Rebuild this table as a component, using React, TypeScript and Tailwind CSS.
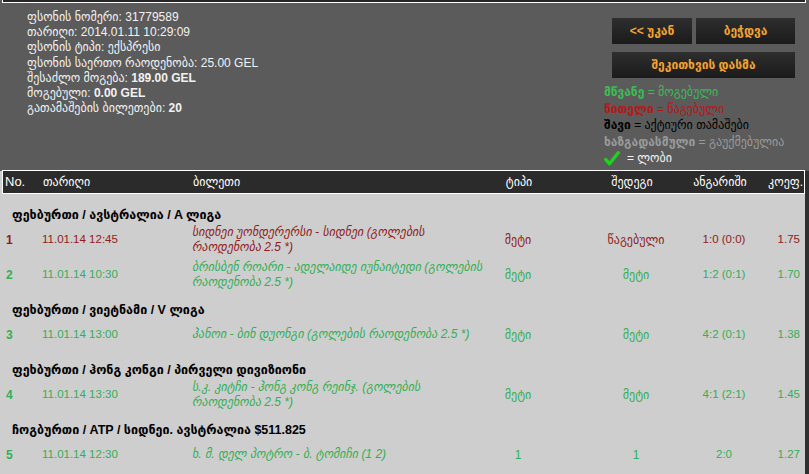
import type { ReactNode } from "react";

type Row = {
  no: number;
  date: string;
  ticket: string[];
  type: string;
  result: string;
  score: string;
  coef: string;
  lost?: boolean;
};

type Group = { title: string; rows: Row[] };

const info: { label: string; value: string; bold?: boolean }[] = [
  { label: "ფსონის ნომერი:", value: "31779589" },
  { label: "თარიღი:", value: "2014.01.11 10:29:09" },
  { label: "ფსონის ტიპი:", value: "ექსპრესი" },
  { label: "ფსონის საერთო რაოდენობა:", value: "25.00 GEL" },
  { label: "შესაძლო მოგება:", value: "189.00 GEL", bold: true },
  { label: "მოგებული:", value: "0.00 GEL", bold: true },
  { label: "გათამაშების ბილეთები:", value: "20", bold: true },
];

const groups: Group[] = [
  {
    title: "ფეხბურთი / ავსტრალია / A ლიგა",
    rows: [
      { no: 1, date: "11.01.14 12:45", ticket: ["სიდნეი უონდერერსი - სიდნეი (გოლების", "რაოდენობა 2.5 *)"], type: "მეტი", result: "წაგებული", score: "1:0 (0:0)", coef: "1.75", lost: true },
      { no: 2, date: "11.01.14 10:30", ticket: ["ბრისბენ როარი - ადელაიდე იუნაიტედი (გოლების", "რაოდენობა 2.5 *)"], type: "მეტი", result: "მეტი", score: "1:2 (0:1)", coef: "1.70" },
    ],
  },
  {
    title: "ფეხბურთი / ვიეტნამი / V ლიგა",
    rows: [
      { no: 3, date: "11.01.14 13:00", ticket: ["ჰანოი - ბინ დუონგი (გოლების რაოდენობა 2.5 *)"], type: "მეტი", result: "მეტი", score: "4:2 (0:1)", coef: "1.38" },
    ],
  },
  {
    title: "ფეხბურთი / ჰონგ კონგი / პირველი დივიზიონი",
    rows: [
      { no: 4, date: "11.01.14 13:30", ticket: ["ს.კ. კიტჩი - ჰონგ კონგ რეინჯ. (გოლების", "რაოდენობა 2.5 *)"], type: "მეტი", result: "მეტი", score: "4:1 (2:1)", coef: "1.45" },
    ],
  },
  {
    title: "ჩოგბურთი / ATP / სიდნეი. ავსტრალია $511.825",
    rows: [
      { no: 5, date: "11.01.14 12:30", ticket: ["ხ. მ. დელ პოტრო - ბ. ტომიჩი (1 2)"], type: "1", result: "1", score: "2:0", coef: "1.27" },
    ],
  },
];

function DarkButton({ children, className }: { children: ReactNode; className: string }) {
  return (
    <button className={`h-[26px] bg-gradient-to-b from-[#2e2e2e] to-[#1b1b1b] text-[#f3a332] text-[12px] font-bold cursor-pointer ${className}`}>
      {children}
    </button>
  );
}

function Check() {
  return (
    <svg width="16" height="15" viewBox="0 0 16 15">
      <path d="M1.8 8.5 L5.5 12.8 L14.3 1.8" fill="none" stroke="#1fd21f" strokeWidth="3.4" strokeLinecap="round" strokeLinejoin="round" />
    </svg>
  );
}

export default function App() {
  return (
    <div className="w-[809px] h-[474px] overflow-hidden bg-[#5b5b5b] flex flex-col font-['Liberation_Sans','DejaVu_Sans',sans-serif]">
      <div className="h-[3px] ml-[2px] w-[804px] bg-[#262626] border-x border-b border-white shrink-0" />

      {/* top panel */}
      <div className="h-[168px] shrink-0 flex">
        <div className="pl-[27px] pt-[7px] text-[12px] leading-[15.2px] text-[#f2f2f2]">
          {info.map(i => (
            <div key={i.label}>
              {i.label} <span className={i.bold ? "font-bold" : ""}>{i.value}</span>
            </div>
          ))}
        </div>

        <div className="ml-auto w-[207px] pl-[2px] pt-[15px] flex flex-col">
          <div className="pl-[8px] flex gap-[4px]">
            <DarkButton className="w-[80px]">&lt;&lt; უკან</DarkButton>
            <DarkButton className="w-[99px]">ბეჭდვა</DarkButton>
          </div>
          <div className="pl-[8px] mt-[8px]">
            <DarkButton className="w-[183px]">შეკითხვის დასმა</DarkButton>
          </div>
          <div className="mt-[6px] text-[12px] leading-[16.5px] whitespace-nowrap">
            <div className="text-[#3dbb55]"><b>მწვანე</b> = მოგებული</div>
            <div className="text-[#b41717]"><b>წითელი</b> = წაგებული</div>
            <div className="text-black"><b>შავი</b> = აქტიური თამაშები</div>
            <div className="text-[#9a9a9a]"><b>ხაზგადასმული</b> = გაუქმებულია</div>
            <div className="flex items-center gap-[7px] text-[#f2f2f2]">
              <Check />
              <span>= ლობი</span>
            </div>
          </div>
        </div>
      </div>

      {/* table */}
      <div className="flex-1 flex bg-[#2f2f2f]">
        <div className="w-[805px] bg-[#cecece] flex flex-col">
          <div className="-mt-px ml-[2px] w-[803px] h-[24px] bg-[#2b2b2b] border border-white flex items-center text-[12px] text-white shrink-0">
            <div className="w-[40px] pl-[2px] text-[13px]">No.</div>
            <div className="w-[150px]">თარიღი</div>
            <div className="w-[263px]">ბილეთი</div>
            <div className="w-[126px] text-center">ტიპი</div>
            <div className="w-[100px] text-center">შედეგი</div>
            <div className="w-[76px] text-center">ანგარიში</div>
            <div className="flex-1 text-right pr-[1px]">კოეფ.</div>
          </div>

          <div className="pt-[3px]">
            {groups.map(g => (
              <div key={g.title}>
                <div className="h-[25px] flex items-end pl-[12px] text-[12.5px] leading-[14px] font-bold text-black">
                  {g.title}
                </div>
                {g.rows.map(r => {
                  const color = r.lost ? "text-[#8e1c1c]" : "text-[#34ae55]";
                  return (
                    <div key={r.no} className={`h-[35px] flex items-center text-[12px] ${color}`}>
                      <div className="w-[42px] pl-[6px] font-bold">{r.no}</div>
                      <div className="w-[150px] text-[11.5px]">{r.date}</div>
                      <div className="w-[258px] italic leading-[15px] whitespace-nowrap">
                        {r.ticket.map(t => <div key={t}>{t}</div>)}
                      </div>
                      <div className="w-[136px] text-center">{r.type}</div>
                      <div className="w-[100px] text-center">{r.result}</div>
                      <div className="w-[76px] text-center text-[11.5px]">{r.score}</div>
                      <div className="flex-1 text-right pr-[5px] text-[11.5px]">{r.coef}</div>
                    </div>
                  );
                })}
              </div>
            ))}
          </div>
        </div>
      </div>
    </div>
  );
}
